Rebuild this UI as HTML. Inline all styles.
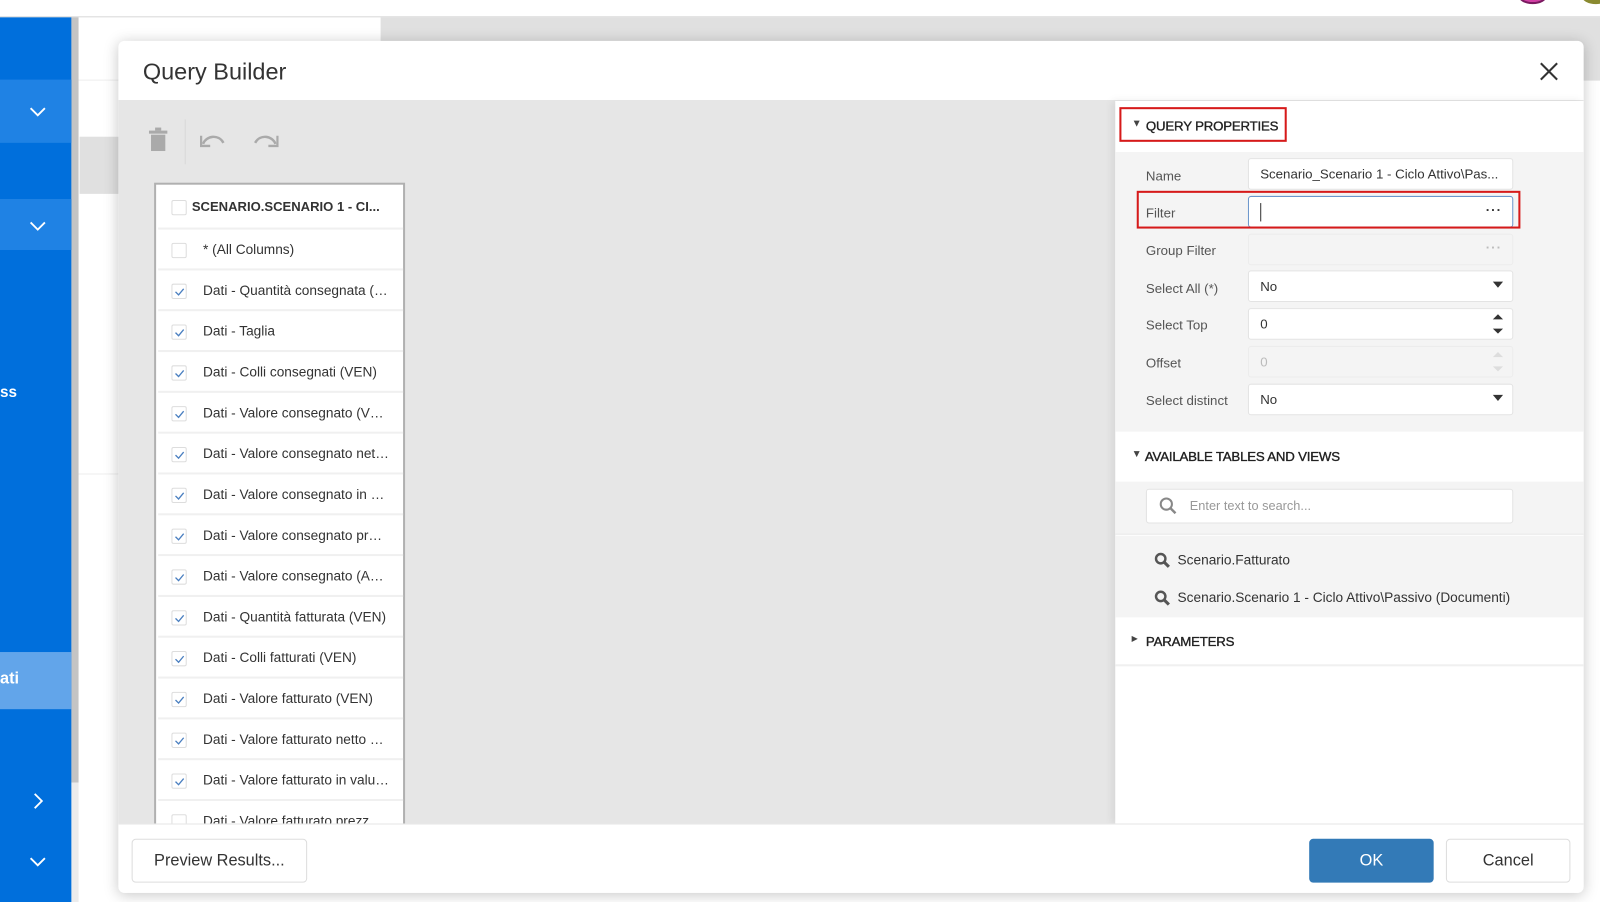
<!DOCTYPE html>
<html><head><meta charset="utf-8"><style>
*{box-sizing:border-box;margin:0;padding:0}
html,body{width:1600px;height:902px;overflow:hidden;background:#fff;font-family:"Liberation Sans",Arial,sans-serif}
#w{position:absolute;left:0;top:0;width:1568px;height:884px;transform:scale(1.020408);transform-origin:0 0;overflow:hidden}
.a{position:absolute}
.chev{position:absolute;left:29px;width:16px;height:16px}
.dlg{left:116px;top:40px;width:1436px;height:835px;background:#fff;border-radius:6px;box-shadow:0 2px 14px rgba(0,0,0,.22);overflow:hidden}
.row{position:absolute;left:2px;width:242px;height:40px;border-bottom:2px solid #f0f0f0;font-size:13.4px;color:#333;line-height:40px}
.cb{position:absolute;left:13px;top:13px;width:15px;height:15px;border:1px solid #ddd;border-radius:2px;background:#fff}
.cb svg{position:absolute;left:2px;top:3px}
.row span{position:absolute;left:44px;white-space:nowrap}
.lbl{position:absolute;left:30px;font-size:13px;color:#555}
.inp{position:absolute;left:130px;width:260px;height:31px;border:1px solid #e3e3e3;border-radius:3px;background:#fff;font-size:13px;color:#333;padding-left:11px;line-height:29px}
.sec{position:absolute;left:0;width:460px;font-size:13px;color:#222;letter-spacing:-.2px;-webkit-text-stroke:.35px #222}
.tri{position:absolute;left:16px;font-size:10px;color:#444;-webkit-text-stroke:0}
.btn{position:absolute;top:14px;height:43px;border:1px solid #ddd;border-radius:4px;font-size:16px;color:#333;text-align:center;line-height:41px;background:#fff}
.dots{position:absolute;right:10px;top:0;font-weight:bold;letter-spacing:1px;line-height:26px}
</style></head><body><div id="w">
<div class="a" style="left:0;top:16px;width:1568px;height:1px;background:#d8d8d8"></div>
<div class="a" style="left:1488px;top:-12px;width:28px;height:16px;border-radius:50%;background:#d23fa4;border:2px solid #7a1a60"></div>
<div class="a" style="left:1550px;top:-12px;width:28px;height:16px;border-radius:50%;background:#8a8a30"></div>
<div class="a" style="left:373px;top:17px;width:1195px;height:62px;background:#e0e0e0"></div>
<div class="a" style="left:76px;top:78px;width:300px;height:1px;background:#eee"></div>
<div class="a" style="left:78px;top:134px;width:40px;height:56px;background:#e0e0e0"></div>
<div class="a" style="left:76px;top:464px;width:40px;height:1px;background:#eee"></div>
<div class="a" style="left:0;top:17px;width:70px;height:867px;background:#006fdc"></div>
<div class="a" style="left:70px;top:17px;width:7px;height:750px;background:#c4c4c4"></div>
<div class="a" style="left:70px;top:767px;width:7px;height:117px;background:#ececec"></div>
<div class="a" style="left:0;top:78px;width:70px;height:62px;background:#1f82e4"></div>
<div class="a" style="left:0;top:195px;width:70px;height:50px;background:#1f82e4"></div>
<div class="a" style="left:0;top:639px;width:70px;height:56px;background:#62a5ea"></div>
<svg class="chev" style="top:102px" viewBox="0 0 16 16"><path d="M1 4l7 7 7-7" fill="none" stroke="#fff" stroke-width="1.8"/></svg>
<svg class="chev" style="top:214px" viewBox="0 0 16 16"><path d="M1 4l7 7 7-7" fill="none" stroke="#fff" stroke-width="1.8"/></svg>
<svg class="chev" style="top:777px" viewBox="0 0 16 16"><path d="M5 1l7 7-7 7" fill="none" stroke="#fff" stroke-width="1.8"/></svg>
<svg class="chev" style="top:837px" viewBox="0 0 16 16"><path d="M1 4l7 7 7-7" fill="none" stroke="#fff" stroke-width="1.8"/></svg>
<div class="a" style="left:0;top:376px;color:#fff;font-weight:bold;font-size:15px">ss</div>
<div class="a" style="left:0;top:657px;color:#fff;font-weight:bold;font-size:16px">ati</div>
<div class="a dlg">
  <div class="a" style="left:24px;top:17px;font-size:23px;color:#333">Query Builder</div>
  <svg class="a" style="left:1393px;top:21px" width="18" height="18" viewBox="0 0 18 18"><path d="M1 1l16 16M17 1L1 17" stroke="#333" stroke-width="2"/></svg>
  <div class="a" style="left:0;top:58px;width:1436px;height:1px;background:#e6e6e6"></div>
  <div class="a" style="left:0;top:59px;width:977px;height:708px;background:#e6e6e6;overflow:hidden">
    <svg class="a" style="left:29px;top:26px" width="20" height="24" viewBox="0 0 20 24"><rect x="1" y="3" width="18" height="3" fill="#aaa"/><rect x="7" y="0" width="6" height="3" fill="#aaa"/><rect x="3" y="7" width="14" height="16" fill="#aaa"/></svg>
    <div class="a" style="left:65px;top:18px;width:1px;height:44px;background:#d8d8d8"></div>
    <svg class="a" style="left:80px;top:30px" width="26" height="16" viewBox="0 0 26 16"><path d="M3 12C6 4 18 2 23 11" fill="none" stroke="#aaa" stroke-width="2.4"/><path d="M1 4v10h9" fill="none" stroke="#aaa" stroke-width="2.4"/></svg>
    <svg class="a" style="left:131px;top:30px" width="26" height="16" viewBox="0 0 26 16"><path d="M23 12C20 4 8 2 3 11" fill="none" stroke="#aaa" stroke-width="2.4"/><path d="M25 4v10h-9" fill="none" stroke="#aaa" stroke-width="2.4"/></svg>
    <div class="a" style="left:35px;top:80px;width:246px;height:640px;border:2px solid #b0b0b0;background:#fff;overflow:hidden">
      <div class="row" style="top:0;height:44px;line-height:44px;font-weight:bold;font-size:12.8px"><div class="cb" style="top:15px"></div><span style="left:33px">SCENARIO.SCENARIO 1 - CI...</span></div>
      <div class="row" style="top:44px"><div class="cb"></div><span>* (All Columns)</span></div>
      <div class="row" style="top:84px"><div class="cb"><svg width="10" height="8"><path d="M1 4l3 3 5-6" fill="none" stroke="#4a7fc0" stroke-width="1.3"/></svg></div><span>Dati - Quantità consegnata (…</span></div>
      <div class="row" style="top:124px"><div class="cb"><svg width="10" height="8"><path d="M1 4l3 3 5-6" fill="none" stroke="#4a7fc0" stroke-width="1.3"/></svg></div><span>Dati - Taglia</span></div>
      <div class="row" style="top:164px"><div class="cb"><svg width="10" height="8"><path d="M1 4l3 3 5-6" fill="none" stroke="#4a7fc0" stroke-width="1.3"/></svg></div><span>Dati - Colli consegnati (VEN)</span></div>
      <div class="row" style="top:204px"><div class="cb"><svg width="10" height="8"><path d="M1 4l3 3 5-6" fill="none" stroke="#4a7fc0" stroke-width="1.3"/></svg></div><span>Dati - Valore consegnato (V…</span></div>
      <div class="row" style="top:244px"><div class="cb"><svg width="10" height="8"><path d="M1 4l3 3 5-6" fill="none" stroke="#4a7fc0" stroke-width="1.3"/></svg></div><span>Dati - Valore consegnato net…</span></div>
      <div class="row" style="top:284px"><div class="cb"><svg width="10" height="8"><path d="M1 4l3 3 5-6" fill="none" stroke="#4a7fc0" stroke-width="1.3"/></svg></div><span>Dati - Valore consegnato in …</span></div>
      <div class="row" style="top:324px"><div class="cb"><svg width="10" height="8"><path d="M1 4l3 3 5-6" fill="none" stroke="#4a7fc0" stroke-width="1.3"/></svg></div><span>Dati - Valore consegnato pr…</span></div>
      <div class="row" style="top:364px"><div class="cb"><svg width="10" height="8"><path d="M1 4l3 3 5-6" fill="none" stroke="#4a7fc0" stroke-width="1.3"/></svg></div><span>Dati - Valore consegnato (A…</span></div>
      <div class="row" style="top:404px"><div class="cb"><svg width="10" height="8"><path d="M1 4l3 3 5-6" fill="none" stroke="#4a7fc0" stroke-width="1.3"/></svg></div><span>Dati - Quantità fatturata (VEN)</span></div>
      <div class="row" style="top:444px"><div class="cb"><svg width="10" height="8"><path d="M1 4l3 3 5-6" fill="none" stroke="#4a7fc0" stroke-width="1.3"/></svg></div><span>Dati - Colli fatturati (VEN)</span></div>
      <div class="row" style="top:484px"><div class="cb"><svg width="10" height="8"><path d="M1 4l3 3 5-6" fill="none" stroke="#4a7fc0" stroke-width="1.3"/></svg></div><span>Dati - Valore fatturato (VEN)</span></div>
      <div class="row" style="top:524px"><div class="cb"><svg width="10" height="8"><path d="M1 4l3 3 5-6" fill="none" stroke="#4a7fc0" stroke-width="1.3"/></svg></div><span>Dati - Valore fatturato netto …</span></div>
      <div class="row" style="top:564px"><div class="cb"><svg width="10" height="8"><path d="M1 4l3 3 5-6" fill="none" stroke="#4a7fc0" stroke-width="1.3"/></svg></div><span>Dati - Valore fatturato in valu…</span></div>
      <div class="row" style="top:604px"><div class="cb"></div><span>Dati - Valore fatturato prezz…</span></div>
    </div>
  </div>
  <div class="a" style="left:977px;top:59px;width:459px;height:708px;background:#fff;box-shadow:-3px 0 8px rgba(0,0,0,.08)">
    <div class="sec" style="top:0;height:50px"><span class="tri" style="top:17px">▼</span><span class="a" style="left:30px;top:17px">QUERY PROPERTIES</span></div>
    <div class="a" style="left:4px;top:6px;width:164px;height:34px;border:2px solid #d61a1a"></div>
    <div class="a" style="left:0;top:50px;width:459px;height:274px;background:#f4f4f4">
      <div class="lbl" style="top:16px">Name</div><div class="inp" style="top:6px;overflow:hidden;white-space:nowrap">Scenario_Scenario 1 - Ciclo Attivo\Pas...</div>
      <div class="lbl" style="top:52px">Filter</div><div class="inp" style="top:43px;border-color:#6b96cc"><div class="a" style="left:11px;top:6px;width:1px;height:18px;background:#333"></div><span class="dots">···</span></div>
      <div class="a" style="left:21px;top:38px;width:376px;height:37px;border:2px solid #d61a1a"></div>
      <div class="lbl" style="top:89px">Group Filter</div><div class="inp" style="top:80px;background:#f4f4f4;border-color:#ececec;color:#bbb"><span class="dots">···</span></div>
      <div class="lbl" style="top:126px">Select All (*)</div><div class="inp" style="top:116px">No<span class="a" style="right:9px;top:10px;width:0;height:0;border-left:5px solid transparent;border-right:5px solid transparent;border-top:6px solid #333"></span></div>
      <div class="lbl" style="top:162px">Select Top</div><div class="inp" style="top:153px">0<span class="a" style="right:9px;top:5px;border-left:5px solid transparent;border-right:5px solid transparent;border-bottom:5px solid #333"></span><span class="a" style="right:9px;top:19px;border-left:5px solid transparent;border-right:5px solid transparent;border-top:5px solid #333"></span></div>
      <div class="lbl" style="top:199px">Offset</div><div class="inp" style="top:190px;background:#f4f4f4;border-color:#ececec;color:#bbb">0<span class="a" style="right:9px;top:5px;border-left:5px solid transparent;border-right:5px solid transparent;border-bottom:5px solid #ddd"></span><span class="a" style="right:9px;top:19px;border-left:5px solid transparent;border-right:5px solid transparent;border-top:5px solid #ddd"></span></div>
      <div class="lbl" style="top:236px">Select distinct</div><div class="inp" style="top:227px">No<span class="a" style="right:9px;top:10px;border-left:5px solid transparent;border-right:5px solid transparent;border-top:6px solid #333"></span></div>
    </div>
    <div class="sec" style="top:325px;height:48px"><span class="tri" style="top:16px">▼</span><span class="a" style="left:29px;top:16px">AVAILABLE TABLES AND VIEWS</span></div>
    <div class="a" style="left:0;top:373px;width:459px;height:52px;background:#f4f4f4;border-bottom:1px solid #e8e8e8">
      <div class="inp" style="left:30px;top:7px;width:360px;height:34px;padding-left:42px;line-height:32px;color:#999;font-size:12.5px">Enter text to search...
        <svg class="a" style="left:12px;top:7px" width="18" height="18" viewBox="0 0 18 18"><circle cx="7" cy="7" r="5.5" fill="none" stroke="#888" stroke-width="2"/><path d="M11 11l5 5" stroke="#888" stroke-width="2.4"/></svg></div>
    </div>
    <div class="a" style="left:0;top:426px;width:459px;height:80px;background:#f4f4f4;font-size:13.4px;color:#333">
      <svg class="a" style="left:38px;top:16px" width="16" height="16" viewBox="0 0 16 16"><circle cx="6.5" cy="6.5" r="4.6" fill="none" stroke="#555" stroke-width="2.4"/><path d="M10 10l4.5 4.5" stroke="#555" stroke-width="3"/></svg>
      <span class="a" style="left:61px;top:16px">Scenario.Fatturato</span>
      <svg class="a" style="left:38px;top:53px" width="16" height="16" viewBox="0 0 16 16"><circle cx="6.5" cy="6.5" r="4.6" fill="none" stroke="#555" stroke-width="2.4"/><path d="M10 10l4.5 4.5" stroke="#555" stroke-width="3"/></svg>
      <span class="a" style="left:61px;top:53px">Scenario.Scenario 1 - Ciclo Attivo\Passivo (Documenti)</span>
    </div>
    <div class="sec" style="top:506px;height:48px;border-bottom:2px solid #f0f0f0"><span class="tri" style="top:16px;font-size:8px">▶</span><span class="a" style="left:30px;top:16px">PARAMETERS</span></div>
  </div>
  <div class="a" style="left:0;top:767px;width:1436px;height:68px;background:#fff;border-top:1px solid #e6e6e6">
    <div class="btn" style="left:13px;width:172px">Preview Results...</div>
    <div class="btn" style="left:1167px;width:122px;background:#337ab7;border-color:#337ab7;color:#fff">OK</div>
    <div class="btn" style="left:1301px;width:122px">Cancel</div>
  </div>
</div>
</div></body></html>
